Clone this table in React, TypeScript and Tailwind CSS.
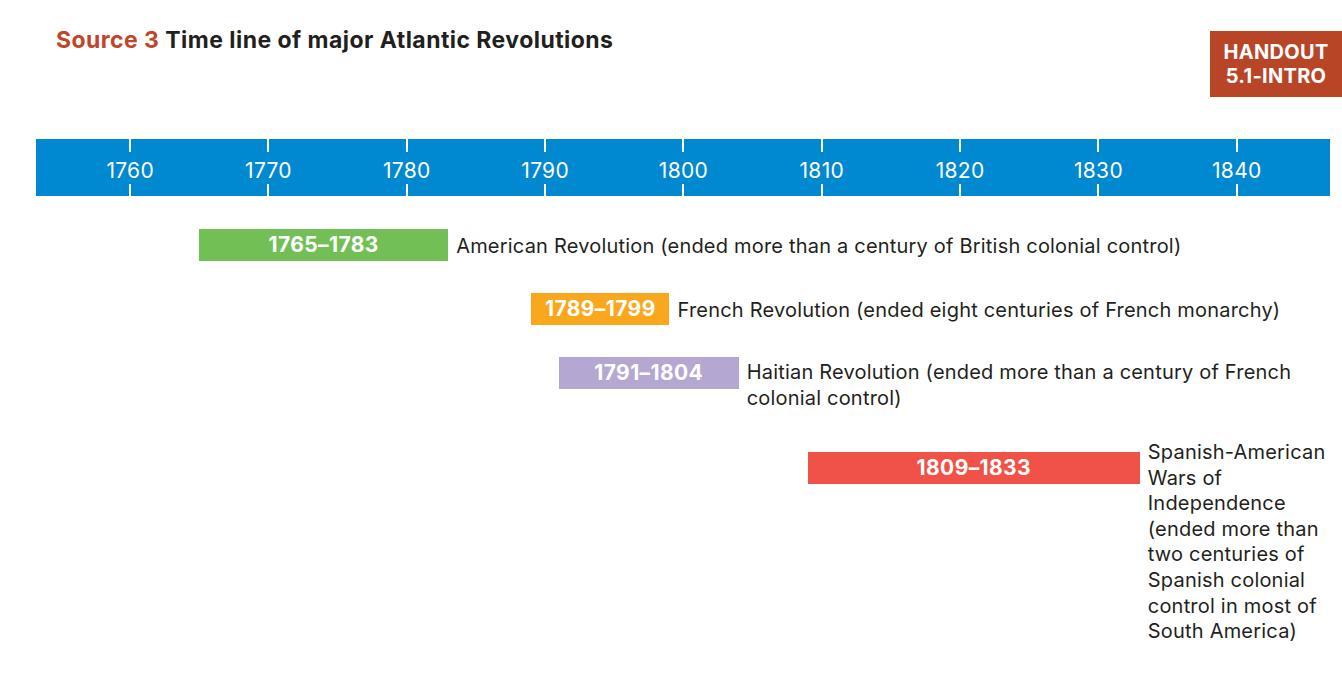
const YEAR_PX = 13.833;
const ORIGIN_X = 130; // x of 1760 tick

const ticks = [1760, 1770, 1780, 1790, 1800, 1810, 1820, 1830, 1840];

type Event = {
  start: number;
  end: number;
  color: string;
  text: string;
};

const xOf = (year: number) => ORIGIN_X + (year - 1760) * YEAR_PX;

function Bar({ ev }: { ev: Event }) {
  return (
    <div
      className={`h-[32px] shrink-0 flex items-center justify-center text-white font-bold text-[21px] tracking-[0.4px] ${ev.color}`}
      style={{ width: (ev.end - ev.start) * YEAR_PX }}
    >
      {ev.start}–{ev.end}
    </div>
  );
}

export default function App() {
  const american: Event = {
    start: 1765,
    end: 1783,
    color: "bg-[#72bf55]",
    text: "American Revolution (ended more than a century of British colonial control)",
  };
  const french: Event = {
    start: 1789,
    end: 1799,
    color: "bg-[#f9a81e]",
    text: "French Revolution (ended eight centuries of French monarchy)",
  };
  const haitian: Event = {
    start: 1791,
    end: 1804,
    color: "bg-[#b4a7d2]",
    text: "Haitian Revolution (ended more than a century of French colonial control)",
  };
  const spanish: Event = {
    start: 1809,
    end: 1833,
    color: "bg-[#f05247]",
    text: "Spanish-American Wars of Independence (ended more than two centuries of Spanish colonial control in most of South America)",
  };

  return (
    <div className="w-[1342px] h-[680px] bg-white overflow-hidden text-[#231f20] font-['Inter','Liberation_Sans',sans-serif]">
      {/* header */}
      <div className="flex justify-between items-start h-[97px]">
        <h1 className="mt-[25px] ml-[56px] text-[23px] leading-[30px] font-bold tracking-[0.45px]">
          <span className="text-[#c0462a]">Source 3</span> Time line of major Atlantic Revolutions
        </h1>
        <div className="mt-[31px] w-[132px] h-[66px] bg-[#b94527] text-white font-bold text-[20px] leading-[24px] tracking-[0.3px] flex flex-col items-center justify-center">
          <span>HANDOUT</span>
          <span>5.1-INTRO</span>
        </div>
      </div>

      {/* axis */}
      <div className="mt-[42px] ml-[36px] w-[1294px] h-[57px] bg-[#0089d0] flex pl-[25px]">
        {ticks.map((t) => (
          <div key={t} className="w-[138.33px] shrink-0 flex flex-col items-center justify-between">
            <div className="w-[2px] h-[13px] bg-white" />
            <span className="mt-[5px] text-white text-[21px] leading-[24px] tracking-[0.3px]">{t}</span>
            <div className="w-[2px] h-[12px] bg-white" />
          </div>
        ))}
      </div>

      {/* American */}
      <div className="mt-[33px] flex items-center" style={{ paddingLeft: xOf(american.start) }}>
        <Bar ev={american} />
        <p className="ml-[8px] mt-[1px] text-[20px] leading-[26px] tracking-[0.2px]">{american.text}</p>
      </div>

      {/* French */}
      <div className="mt-[32px] flex items-center" style={{ paddingLeft: xOf(french.start) }}>
        <Bar ev={french} />
        <p className="ml-[8px] mt-[1px] text-[20px] leading-[26px] tracking-[0.2px]">{french.text}</p>
      </div>

      {/* Haitian */}
      <div className="mt-[32px] flex items-start" style={{ paddingLeft: xOf(haitian.start) }}>
        <Bar ev={haitian} />
        <p className="ml-[8px] mt-[2px] pr-[30px] text-[20px] leading-[26px] tracking-[0.2px]">{haitian.text}</p>
      </div>

      {/* Spanish */}
      <div className="mt-[29px] flex items-start" style={{ paddingLeft: xOf(spanish.start) }}>
        <div className="mt-[12px]">
          <Bar ev={spanish} />
        </div>
        <p className="ml-[8px] w-[190px] text-[20px] leading-[25.6px] tracking-[0.2px]">{spanish.text}</p>
      </div>
    </div>
  );
}
